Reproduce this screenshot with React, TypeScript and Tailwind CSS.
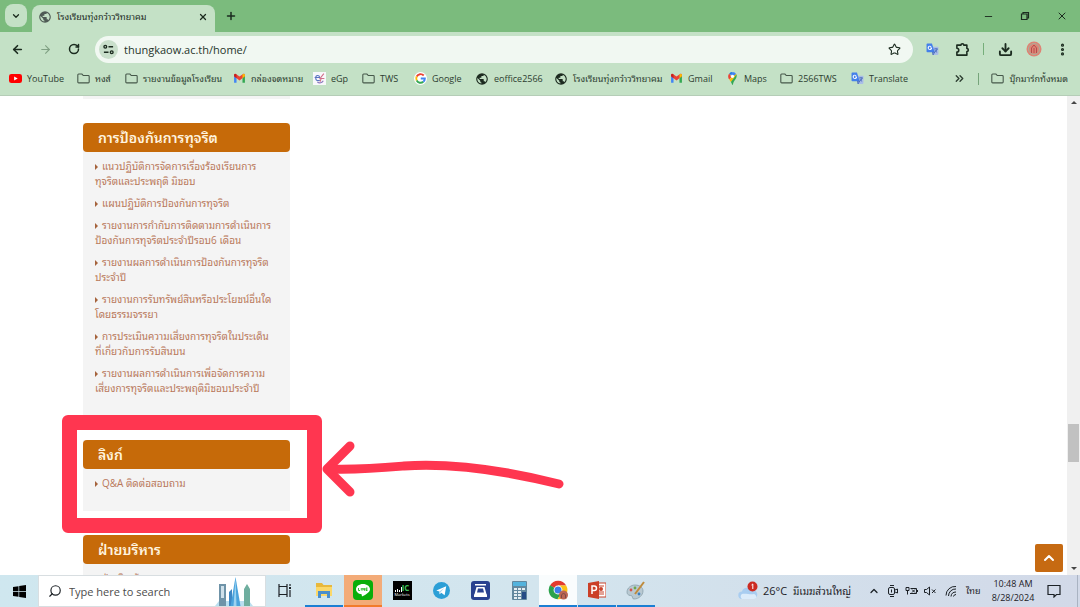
import React from 'react';
import {
  ArrowLeft,
  ArrowRight,
  ChevronDown,
  ChevronUp,
  ChevronsRight,
  Download,
  EllipsisVertical,
  Minus,
  Plus,
  RotateCw,
  Search,
  Star,
  X,
} from 'lucide-react';

type IconName = 'youtube' | 'folder' | 'gmail' | 'egp' | 'google' | 'globe' | 'maps' | 'translate';

interface Bookmark {
  label: string;
  icon: IconName;
  width: string;
}

const BOOKMARKS: Bookmark[] = [
  { label: 'YouTube', icon: 'youtube', width: 'w-[68px]' },
  { label: 'หงส์', icon: 'folder', width: 'w-[48px]' },
  { label: 'รายงานข้อมูลโรงเรียน', icon: 'folder', width: 'w-[108px]' },
  { label: 'กล่องจดหมาย', icon: 'gmail', width: 'w-[80px]' },
  { label: 'eGp', icon: 'egp', width: 'w-[49px]' },
  { label: 'TWS', icon: 'folder', width: 'w-[52px]' },
  { label: 'Google', icon: 'google', width: 'w-[61px]' },
  { label: 'eoffice2566', icon: 'globe', width: 'w-[79px]' },
  { label: 'โรงเรียนทุ่งกว๋าววิทยาคม', icon: 'globe', width: 'w-[116px]' },
  { label: 'Gmail', icon: 'gmail', width: 'w-[56px]' },
  { label: 'Maps', icon: 'maps', width: 'w-[54px]' },
  { label: '2566TWS', icon: 'folder', width: 'w-[71px]' },
  { label: 'Translate', icon: 'translate', width: 'w-[60px]' },
];

const CORRUPTION_LINKS: string[][] = [
  ['แนวปฏิบัติการจัดการเรื่องร้องเรียนการ', 'ทุจริตและประพฤติ มิชอบ'],
  ['แผนปฏิบัติการป้องกันการทุจริต'],
  ['รายงานการกำกับการติดตามการดำเนินการ', 'ป้องกันการทุจริตประจำปีรอบ6 เดือน'],
  ['รายงานผลการดำเนินการป้องกันการทุจริต', 'ประจำปี'],
  ['รายงานการรับทรัพย์สินหรือประโยชน์อื่นใด', 'โดยธรรมจรรยา'],
  ['การประเมินความเสี่ยงการทุจริตในประเด็น', 'ที่เกี่ยวกับการรับสินบน'],
  ['รายงานผลการดำเนินการเพื่อจัดการความ', 'เสี่ยงการทุจริตและประพฤติมิชอบประจำปี'],
];

const Globe: React.FC<{ className: string }> = ({ className }) => (
  <svg className={className} viewBox="0 0 24 24" fill="currentColor">
    <path d="M12 2a10 10 0 1 0 0 20 10 10 0 0 0 0-20zm-1 17.9A8 8 0 0 1 4.2 10.200L9 15v1a2 2 0 0 0 2 2v1.900zm6.900-2.500A2 2 0 0 0 16 16h-1v-3a1 1 0 0 0-1-1H8v-2h2a1 1 0 0 0 1-1V7h2a2 2 0 0 0 2-2v-.4a8 8 0 0 1 2.900 12.800z" />
  </svg>
);

const Translate: React.FC<{ className: string }> = ({ className }) => (
  <svg className={className} viewBox="0 0 24 24">
    <path d="M9 7h12.500A1.500 1.500 0 0 1 23 8.500v12a1.500 1.500 0 0 1-1.500 1.500H13z" fill="#a9bde8" />
    <path d="M2.500 1H11l5 16H2.500A1.500 1.500 0 0 1 1 15.500v-13A1.500 1.500 0 0 1 2.500 1z" fill="#4480ea" />
    <path d="M11.200 8.200H7.600v1.900h1.700c-.3 1-1 1.400-1.900 1.400a2.300 2.300 0 1 1 1.500-4l1.300-1.300A4.100 4.100 0 1 0 11.200 8.200z" fill="#fff" />
    <path d="M15 11h7M18.500 9.500V11M20.500 11c-.6 3-2.500 4.800-4.700 6M16.500 13c.8 2 2.200 3.300 4 4.200M12 17h4l-3 5z" fill="none" stroke="#3f62b5" strokeWidth="1.500" />
  </svg>
);

const SiteIcon: React.FC<{ name: IconName }> = ({ name }) => {
  const size = 'h-[13px] w-[13px] shrink-0';
  switch (name) {
    case 'youtube':
      return (
        <svg className={size} viewBox="0 0 24 24">
          <rect y="3.500" width="24" height="17" rx="4.500" fill="#f00" />
          <path d="M9.500 8.200v7.600l6.500-3.800z" fill="#fff" />
        </svg>
      );
    case 'folder':
      return (
        <svg className={size} viewBox="0 0 24 24" fill="none" stroke="#46584a" strokeWidth="2">
          <path d="M1.500 5.500c0-1 .6-1.700 1.600-1.700h6l2.500 2.700h9.300c1 0 1.600.7 1.600 1.600v10.300c0 1-.6 1.600-1.600 1.600H3.100c-1 0-1.600-.6-1.600-1.600z" />
        </svg>
      );
    case 'gmail':
      return (
        <svg className={size} viewBox="0 0 24 24">
          <path d="M2 6v14h4.500V9z" fill="#4285f4" />
          <path d="M17.500 9v11H22V6z" fill="#34a853" />
          <path d="M2 5.500C2 3.500 4.500 2.800 6 4l6 4.500L18 4c1.500-1.200 4-.5 4 1.500V8l-10 7.500L2 8z" fill="#ea4335" />
          <path d="M2 5.500C2 4 3.500 3.300 5 3.500l1.500 1V11.500L2 8z" fill="#c5221f" />
          <path d="M22 5.500c0-1.500-1.500-2.200-3-2l-1.500 1v7L22 8z" fill="#fbbc04" />
        </svg>
      );
    case 'egp':
      return (
        <svg className={size} viewBox="0 0 24 24" fill="none">
          <rect width="24" height="24" fill="#f8f8fb" />
          <path d="M3 10h9c0-5-7-5-7 1 0 5 4 6 8 4" stroke="#5a74c0" strokeWidth="2" />
          <path d="M20 3 13 12h8M15 12l-2 6" stroke="#d0708a" strokeWidth="2" />
          <path d="M8 19c4 2 9 1 11-3" stroke="#8c78bd" strokeWidth="2" />
        </svg>
      );
    case 'google':
      return (
        <svg className={size} viewBox="0 0 24 24">
          <circle cx="12" cy="12" r="12" fill="#fff" />
          <g fill="none" strokeWidth="3.600">
            <path d="M18 6.500A8 8 0 0 0 5 8.300" stroke="#ea4335" />
            <path d="M5 8.300a8 8 0 0 0 0 7.400" stroke="#fbbc05" />
            <path d="M5 15.700a8 8 0 0 0 12.200 2.400" stroke="#34a853" />
            <path d="M17.200 18.100A8 8 0 0 0 20 12h-7.500" stroke="#4285f4" />
          </g>
        </svg>
      );
    case 'maps':
      return (
        <svg className={size} viewBox="0 0 24 24">
          <path d="M12 0a8 8 0 0 0-6 2.700L9.500 6z" fill="#1a73e8" />
          <path d="M12 0 9.200 6 14 10l5-6A8 8 0 0 0 12 0z" fill="#4285f4" />
          <path d="M6 2.700C3 6.500 3.500 10.500 6 14l4-5z" fill="#ea4335" />
          <path d="M6 14c1 1.600 2 2.800 3 4.500L19.500 5.500 18.500 3.500z" fill="#fbbc04" />
          <path d="M19.300 4.800C21.500 11 15 15 13.500 20.500c-.5 2-.8 3.500-1.500 3.500-1 0-1-3-3-5.500z" fill="#34a853" />
          <circle cx="12" cy="8" r="3" fill="#fff" />
        </svg>
      );
    case 'translate':
      return <Translate className={size} />;
    default:
      return <Globe className="h-[14px] w-[14px] shrink-0 text-[#1d2b20]" />;
  }
};

const TabStrip: React.FC = () => (
  <div className="flex h-8 items-end bg-[#7bbb7d] pl-[5px]">
    <button aria-label="Search tabs" className="mb-[5px] flex h-[23px] w-[22px] items-center justify-center rounded-lg bg-[#c4e1c6]">
      <ChevronDown className="h-[10px] w-[10px]" strokeWidth={3} />
    </button>
    <div className="ml-[5px] flex h-[27px] w-[183px] items-center rounded-t-lg bg-[#c4e1c6] pr-[7px] pb-1 pl-[6px]">
      <Globe className="h-[14px] w-[14px] shrink-0 text-[#4f5b55]" />
      <span className="ml-[5px] flex-1 text-[9px] whitespace-nowrap">โรงเรียนทุ่งกว๋าววิทยาคม</span>
      <button aria-label="Close tab">
        <X className="h-[10px] w-[10px]" strokeWidth={3} />
      </button>
    </div>
    <button aria-label="New tab" className="mb-[10px] ml-[10px]">
      <Plus className="h-3 w-3" strokeWidth={3} />
    </button>
    <div className="mb-[10px] ml-auto flex items-center gap-[26px] pr-3">
      <button aria-label="Minimize"><Minus className="h-[11px] w-[11px]" strokeWidth={2} /></button>
      <button aria-label="Restore">
        <svg className="h-[10px] w-[10px]" viewBox="0 0 10 10" fill="none" stroke="currentColor">
          <path d="M1.500 3h5.500v5.500H1.500zM3 3V1.500h5.500V7H7" strokeWidth="1.200" />
        </svg>
      </button>
      <button aria-label="Close window"><X className="h-3 w-3" strokeWidth={2} /></button>
    </div>
  </div>
);

const Toolbar: React.FC = () => (
  <div className="flex h-[34px] items-center bg-[#c4e1c6] pr-[10px] pl-[11px]">
    <button aria-label="Back"><ArrowLeft className="h-[13px] w-[13px]" strokeWidth={3} /></button>
    <button aria-label="Forward" className="ml-[15px] text-[#80a184]"><ArrowRight className="h-[13px] w-[13px]" strokeWidth={2} /></button>
    <button aria-label="Reload" className="ml-4"><RotateCw className="h-3 w-3" strokeWidth={3} /></button>
    <div className="ml-[15px] flex h-[27px] flex-1 items-center rounded-full bg-[#f1f8f2] pr-3 pl-1">
      <button aria-label="View site information" className="flex h-[19px] w-[19px] items-center justify-center rounded-full bg-[#c9dfcb]">
        <svg className="h-[11px] w-[11px]" viewBox="0 0 24 24" fill="none" stroke="currentColor" strokeWidth="3">
          <circle cx="5" cy="6" r="3" />
          <path d="M12 6h10M2 18h10" />
          <circle cx="19" cy="18" r="3" />
        </svg>
      </button>
      <label className="ml-[6px] flex flex-1 items-center text-[11px]">
        <span className="sr-only">Address</span>
        <input type="text" defaultValue="thungkaow.ac.th/home/" className="h-6 w-full bg-transparent text-[#26352a] outline-none" />
      </label>
      <button aria-label="Bookmark this page"><Star className="h-[13px] w-[13px]" strokeWidth={2} /></button>
    </div>
    <button aria-label="Google Translate" className="ml-[13px]"><Translate className="h-[13px] w-[13px]" /></button>
    <button aria-label="Extensions" className="ml-4">
      <svg className="h-[15px] w-[15px]" viewBox="0 0 24 24" fill="none" stroke="currentColor" strokeWidth="2.500">
        <path d="M3 5h6.500a2.300 2.300 0 0 1 4.600 0H19v5.500a2.300 2.300 0 0 1 0 4.600V21H3v-5a3 3 0 0 0 0-6z" strokeLinejoin="round" />
      </svg>
    </button>
    <span className="ml-[13px] h-3 w-px bg-[#76ae7a]" />
    <button aria-label="Downloads" className="ml-[14px]"><Download className="h-[15px] w-[15px]" strokeWidth={3} /></button>
    <button aria-label="Profile" className="ml-[13px]">
      <svg className="h-4 w-4" viewBox="0 0 16 16" fill="none">
        <circle cx="8" cy="8" r="7.500" fill="#df8374" />
        <circle cx="8" cy="8" r="5.500" stroke="#a8b09b" />
        <path d="M5.500 12V7L8 4l2.500 3v5M8 7v5" stroke="#b44d4a" />
      </svg>
    </button>
    <button aria-label="Menu" className="ml-[13px]"><EllipsisVertical className="h-[15px] w-[15px]" strokeWidth={3} /></button>
  </div>
);

const BookmarksBar: React.FC = () => (
  <nav className="flex h-[30px] items-center border-b border-[#b5cdb7] bg-[#c4e1c6] pr-3 pb-1 pl-[9px] text-[9px] whitespace-nowrap text-[#2c3d30]">
    {BOOKMARKS.map((b, i) => (
      <a key={i} href="#" className={`flex shrink-0 items-center gap-[5px] ${b.width}`}>
        <SiteIcon name={b.icon} />
        {b.label}
      </a>
    ))}
    <button aria-label="More bookmarks" className="ml-auto"><ChevronsRight className="h-[13px] w-[13px]" strokeWidth={2.5} /></button>
    <span className="mx-3 h-3 w-px bg-[#76a47a]" />
    <a href="#" className="flex items-center gap-[5px]">
      <SiteIcon name="folder" />
      บุ๊กมาร์กทั้งหมด
    </a>
  </nav>
);

const SideSection: React.FC<{ title: string; links: string[][]; children?: React.ReactNode }> = ({ title, links, children }) => (
  <section className="relative mb-6 bg-[#f4f4f4]">
    <h2 className="flex h-[29px] items-center rounded bg-[#c66a09] pl-[15px] text-[14px] font-semibold whitespace-nowrap text-[#fff3df]">{title}</h2>
    <ul className="space-y-[7px] pt-[7px] pr-2 pb-5 pl-3 text-[10px] leading-[15px] text-[#b9785a]">
      {links.map((lines) => (
        <li key={lines[0]}>
          <a href="#" className="block whitespace-nowrap">
            <span className="mr-1 inline-block h-0 w-0 border-y-[3px] border-l-[3px] border-y-transparent border-l-[#a5633c]" />
            {lines.map((line) => (
              <React.Fragment key={line}>
                {line}
                <br />
              </React.Fragment>
            ))}
          </a>
        </li>
      ))}
    </ul>
    {children}
  </section>
);

// Hand-drawn highlight around the Q&A section
const Highlight: React.FC = () => (
  <>
    <div className="pointer-events-none absolute -top-[25px] -left-[21px] z-10 h-[118px] w-[260px] rounded-md border-[15px] border-[#ff3650]" />
    <svg className="pointer-events-none absolute top-px left-[238px] z-10 h-[58px] w-[246px]" viewBox="0 0 246 58" fill="none" stroke="#ff3650" strokeWidth="9" strokeLinecap="round" strokeLinejoin="round">
      <path d="M29 5 6 28l23 23" />
      <path d="M8 28c30 1 52-1 75-3 45-3 95 3 155 18" />
    </svg>
  </>
);

const TaskItem: React.FC<{ label: string; className?: string; children: React.ReactNode }> = ({ label, className = '', children }) => (
  <button aria-label={label} className={`mr-px flex h-full w-[38px] shrink-0 items-center justify-center border-b-2 ${className}`}>
    {children}
  </button>
);

const Taskbar: React.FC = () => (
  <footer className="flex h-8 shrink-0 items-center bg-linear-to-r from-[#cfe7ef] via-[#d3e5ee] to-[#d2d9e8] text-[#1c2126]">
    <button aria-label="Start" className="flex w-[38px] justify-center">
      <svg className="h-[13px] w-[13px]" viewBox="0 0 13 13">
        <path d="M0 2l5.500-.8V6H0zM6.200 1 13 0v6H6.200zM0 6.800h5.500v5L0 11zM6.200 6.800H13V13l-6.800-1z" />
      </svg>
    </button>
    <label className="flex h-full w-[228px] shrink-0 items-center border border-[#d8dee1] bg-white pl-[9px]">
      <Search className="h-[14px] w-[14px] -scale-x-100" strokeWidth={2} />
      <span className="sr-only">Search</span>
      <input type="text" placeholder="Type here to search" className="ml-[7px] h-6 w-[120px] flex-1 text-[11px] outline-none placeholder:text-[#4c4c4c]" />
      <svg className="mr-3 h-[30px] w-[38px]" viewBox="0 0 38 30">
        <path d="M0 30 4 25l30 0 4 5z" fill="#b9dff0" />
        <path d="M4 8h7v22H4z" fill="#6f93a8" />
        <path d="M6 10h3v12H6z" fill="#cfe0ea" />
        <path d="M14 16l3-3v17h-3z" fill="#3e87c4" />
        <path d="M20.500 1l5 29H15.500z" fill="#4aa3dc" />
        <path d="M20.500 2l1 28h-3z" fill="#9bd2f0" />
        <path d="M29 13l3-5 3 5v17h-6z" fill="#6fae9f" />
      </svg>
    </label>
    <TaskItem label="Task View" className="border-transparent">
      <svg className="h-[13px] w-[14px]" viewBox="0 0 14 13" fill="none" stroke="currentColor" strokeWidth="1.200">
        <path d="M1 0v2.500h8V0M1 13v-2.500h8V13M1 2.500v8M9 2.500v8M12 0v2M12 6v7" />
        <path d="M11 4h2" strokeWidth="2" />
      </svg>
    </TaskItem>
    <TaskItem label="File Explorer" className="border-[#1b7fd3]">
      <svg className="h-[18px] w-[18px]" viewBox="0 0 18 18">
        <path d="M1 2h6l1.500 2H17v11H1z" fill="#e8b83c" />
        <path d="M1 6h16v9H1z" fill="#fbd869" />
        <path d="M3 10h12v7h-3v-4H6v4H3z" fill="#4a8fcc" />
      </svg>
    </TaskItem>
    <TaskItem label="LINE" className="border-[#f27b2c] bg-[#f3ab78]">
      <svg className="h-5 w-5" viewBox="0 0 20 20">
        <rect width="20" height="20" rx="4" fill="#0aae0a" />
        <path d="M10 4c-4 0-7 2.300-7 5.200 0 2.500 2.300 4.600 5.600 5l.4 2.300c2-1 8-4 8-7.300C17 6.300 14 4 10 4z" fill="#fff" />
        <path d="M5.500 8v2.500H7M8.300 8v2.500M9.800 10.500V8l1.800 2.500V8M14.500 8H13v2.500h1.500M13 9.200h1.500" fill="none" stroke="#0aae0a" strokeWidth=".8" />
      </svg>
    </TaskItem>
    <TaskItem label="IC Markets" className="border-transparent">
      <span className="flex h-[19px] w-[19px] flex-col items-center justify-center bg-black text-white">
        <span className="flex items-end text-[8px] leading-[8px] font-bold text-[#3fc15a]">
          <svg className="h-[5px] w-[7px]" viewBox="0 0 7 5" fill="#fff"><path d="M0 3h1v2H0zM2 2h1v3H2zM4 3h1v2H4zM6 0h1v5H6z" /></svg>
          IC
        </span>
        <span className="text-[4px] leading-[5px]">Markets</span>
      </span>
    </TaskItem>
    <TaskItem label="Telegram" className="border-transparent">
      <svg className="h-[17px] w-[17px]" viewBox="0 0 18 18">
        <circle cx="9" cy="9" r="9" fill="#2c9fd6" />
        <path d="M3.500 9 14 4.500 12.300 14 8.800 11.300 7 13l-.3-3z" fill="#fff" />
        <path d="M6.700 10 12 6.300 8 10.800 7 13z" fill="#a9d4ec" />
      </svg>
    </TaskItem>
    <TaskItem label="Scanner" className="border-transparent">
      <svg className="h-[19px] w-[19px]" viewBox="0 0 19 19">
        <rect width="19" height="19" rx="3" fill="#29418f" />
        <path d="M4 3h11v1.500H4zM5.500 6h8l2.500 9H3z" fill="#fff" />
        <path d="M7 7.500h5l1 4H6z" fill="#29418f" />
        <path d="M3 13.500h13V16H3z" fill="#fff" />
      </svg>
    </TaskItem>
    <TaskItem label="Calculator" className="border-transparent">
      <svg className="h-[19px] w-[15px]" viewBox="0 0 15 19">
        <rect width="15" height="19" rx="1" fill="#63889e" />
        <path d="M1 1h13v4H1z" fill="#53b3dd" />
        <path d="M2 7h3v2H2zM6 7h3v2H6zM10 7h3v2h-3zM2 10h3v2H2zM6 10h3v2H6zM2 13h3v2H2zM6 13h3v2H6zM2 16h3v2H2zM6 16h3v2H6z" fill="#e6eef2" />
        <path d="M10 11h4v7h-4z" fill="#254b85" />
      </svg>
    </TaskItem>
    <TaskItem label="Chrome" className="border-[#1b7fd3] bg-[#f9fcfd]">
      <svg className="h-5 w-5" viewBox="0 0 20 20">
        <path d="M10 10 2 5.500A9.300 9.300 0 0 1 18.200 5.500H10z" fill="#e33b2e" />
        <path d="M10 10 2 5.200A9.300 9.300 0 0 0 9.500 19.300L14 12z" fill="#2ba24c" />
        <path d="M10 5.500h8.200A9.300 9.300 0 0 1 9.500 19.300L14 12z" fill="#fbc116" />
        <circle cx="10" cy="10" r="4.400" fill="#fff" />
        <circle cx="10" cy="10" r="3.500" fill="#3b7de8" />
        <circle cx="15.500" cy="15" r="4.500" fill="#bb6553" />
        <path d="M13.500 18v-3l2-2 2 2v3" fill="none" stroke="#7d4a45" />
      </svg>
    </TaskItem>
    <TaskItem label="PowerPoint" className="border-[#1b7fd3]">
      <svg className="h-[18px] w-[18px]" viewBox="0 0 18 18">
        <path d="M9 2h9v14H9z" fill="#fff" stroke="#c8432b" />
        <path d="M11 5h5M11 11h5M11 13h5" stroke="#c8432b" />
        <circle cx="13" cy="8" r="2" fill="#c8432b" />
        <path d="M0 2l11-2v18L0 16z" fill="#cb3f27" />
        <path d="M4 13V5h2.200a2.300 2.300 0 0 1 0 4.600H4" fill="none" stroke="#fff" strokeWidth="1.500" />
      </svg>
    </TaskItem>
    <TaskItem label="Paint" className="border-[#1b7fd3]">
      <svg className="h-[19px] w-5" viewBox="0 0 20 19">
        <path d="M9 4c5 0 8 2.500 8 6 0 4-4 8-9 8-2 0-1-2-2-3s-5 0-5-4c0-4 4-7 8-7z" fill="#b9c9d2" stroke="#8299a5" strokeWidth=".7" />
        <circle cx="5" cy="9" r="1.400" fill="#d6564a" />
        <circle cx="9" cy="7" r="1.400" fill="#6aa84f" />
        <circle cx="13" cy="13" r="1.400" fill="#3c80c2" />
        <path d="M18 1 9 13" stroke="#bf8b3d" strokeWidth="2" />
      </svg>
    </TaskItem>
    <div className="ml-auto flex items-center whitespace-nowrap">
      <svg className="h-5 w-5" viewBox="0 0 20 20">
        <path d="M4 18a3.700 3.700 0 0 1 0-7.400A5 5 0 0 1 13 9a4.500 4.500 0 0 1 3 9z" fill="#a9cdf0" />
        <path d="M4 18a3 3 0 0 1 0-5c3-1 9 1 12 0 3 1 3 5 0 5z" fill="#dcecfa" />
        <circle cx="14.500" cy="5.500" r="5" fill="#cc2b22" />
        <path d="M13.500 4l1.300-1v5" fill="none" stroke="#fff" />
      </svg>
      <span className="ml-[5px] w-[24px] text-[11px]">26°C</span>
      <span className="ml-[6px] w-[70px] text-[10px]">มีเมฆส่วนใหญ่</span>
      <ChevronUp className="ml-[5px] h-3 w-3" strokeWidth={2.5} />
      <svg className="ml-[7px] h-3 w-3" viewBox="0 0 12 12" fill="none" stroke="currentColor">
        <rect x="1.500" y="2.500" width="6" height="7" rx="1.500" />
        <path d="M3 .5h4M3 11.500h4M8 5l2.500-1v4L8 7M4.500 4.500v3" />
      </svg>
      <svg className="ml-[6px] h-3 w-[13px]" viewBox="0 0 13 12" fill="none" stroke="currentColor">
        <path d="M1 2.500h3v3H1zM2.500 5.500v4M5.500 3.500h6v5H5M12.500 5v2M7 4.500l3 3M10 4.500l-3 3" />
      </svg>
      <svg className="ml-[6px] h-3 w-3" viewBox="0 0 12 12" fill="none" stroke="currentColor">
        <path d="M.5 4.500h2L5.500 2v8l-3-2.500h-2zM8 4.500l3.500 3.500M11.500 4.500 8 8" />
      </svg>
      <svg className="ml-[9px] h-3 w-3" viewBox="0 0 12 12" fill="none" stroke="currentColor">
        <path d="M1 10.500a9 9 0 0 1 10-9M3.500 11a7 7 0 0 1 7.500-7M6 11.500A5 5 0 0 1 11 7M8.500 11.500A2.500 2.500 0 0 1 11 9.500" />
      </svg>
      <span className="ml-[9px] w-[18px] text-[9px]">ไทย</span>
      <div className="ml-1 w-[50px] text-center text-[9px] leading-[14px]">
        10:48 AM
        <br />
        8/28/2024
      </div>
      <button aria-label="Notifications" className="ml-[9px]">
        <svg className="h-[14px] w-[14px]" viewBox="0 0 14 14" fill="none" stroke="currentColor">
          <path d="M1 1.500h12v9H9.500L7 13v-2.500H1z" strokeWidth="1.200" />
        </svg>
      </button>
      <span className="ml-4 h-8 w-[3px] border-l border-[#a9b3c2]" />
    </div>
  </footer>
);

const App: React.FC = () => (
  <div className="flex h-screen flex-col overflow-hidden bg-white font-['Open_Sans','Noto_Sans_Thai_Looped','Loma','Waree','Noto_Sans_Thai',sans-serif] text-[#1b2b1f]">
    <header className="shrink-0">
      <TabStrip />
      <Toolbar />
      <BookmarksBar />
    </header>
    <div className="relative flex min-h-0 flex-1">
      <main className="min-w-0 flex-1 overflow-hidden pl-[83px]">
        <aside className="w-[207px]">
          <div className="mb-6 h-[3px] bg-[#f4f4f4]" />
          <SideSection title="การป้องกันการทุจริต" links={CORRUPTION_LINKS} />
          <SideSection title="ลิงก์" links={[['Q&A ติดต่อสอบถาม']]}>
            <Highlight />
          </SideSection>
          <SideSection title="ฝ่ายบริหาร" links={[['ฝ่ายวิชาข้อมูล']]} />
        </aside>
      </main>
      <div className="flex w-[13px] flex-col items-center justify-between bg-[#f0f0f0] py-[5px]" aria-hidden="true">
        <span className="border-x-[3px] border-b-[3px] border-x-transparent border-b-[#454545]" />
        <span className="mt-auto mb-[105px] h-[38px] w-[11px] bg-[#c1c1c1]" />
        <span className="border-x-[3px] border-t-[3px] border-x-transparent border-t-[#454545]" />
      </div>
      <button aria-label="Back to top" className="absolute right-[17px] bottom-[3px] flex h-7 w-7 items-center justify-center rounded-xs bg-[#c66a12] text-white">
        <ChevronUp className="h-4 w-4" strokeWidth={3} />
      </button>
    </div>
    <Taskbar />
  </div>
);

export default App;
